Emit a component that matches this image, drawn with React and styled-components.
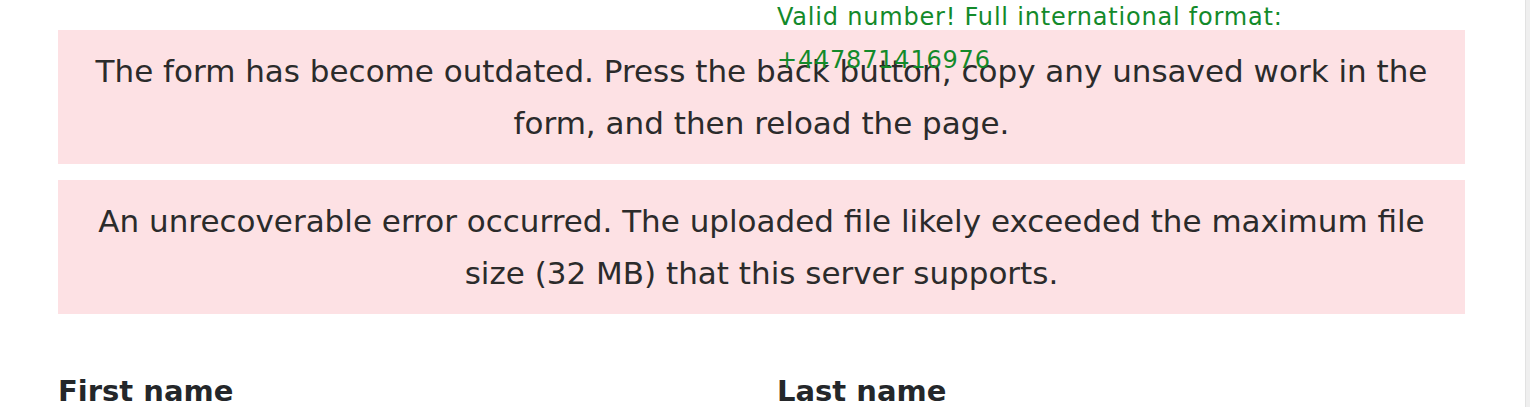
import React from "react";
import styled, { createGlobalStyle } from "styled-components";

const GlobalStyle = createGlobalStyle`
  html, body {
    margin: 0;
    padding: 0;
    background: #fff;
    overflow: hidden;
  }
  body {
    font-family: "DejaVu Sans", "Liberation Sans", sans-serif;
    color: #2b2b2b;
  }
`;

function App() {
  return (
    <Frame>
      <GlobalStyle />
      <Page>
        <PhoneHint>
          Valid number! Full international format:
          <br />
          +447871416976
        </PhoneHint>

        <Alert>
          The form has become outdated. Press the back button, copy any unsaved
          work in the form, and then reload the page.
        </Alert>
        <Alert>
          An unrecoverable error occurred. The uploaded file likely exceeded the
          maximum file size (32 MB) that this server supports.
        </Alert>

        <FieldRow>
          <Field>
            <Label>First name</Label>
          </Field>
          <Field>
            <Label>Last name</Label>
          </Field>
        </FieldRow>
      </Page>
      <ScrollTrack />
    </Frame>
  );
}

export default App;

// ------------------------------ styles ------------------------------

const Frame = styled.div`
  display: flex;
  width: 100%;
  height: 100vh;
`;

const Page = styled.div`
  position: relative;
  flex: 1;
  padding: 30px 60px 0 58px;
  display: flex;
  flex-direction: column;
  gap: 16px;
`;

const ScrollTrack = styled.div`
  width: 4px;
  background: #efefef;
  border-left: 1px solid #e2e2e2;
`;

const PhoneHint = styled.div`
  position: absolute;
  top: -4px;
  left: 777px;
  font-size: 24px;
  letter-spacing: 0.8px;
  line-height: 43px;
  color: #138a2a;
  z-index: 2;
`;

const Alert = styled.div`
  background: #fde1e4;
  color: #2b2b2b;
  text-align: center;
  font-size: 31px;
  line-height: 52px;
  padding: 15px 14px 15px;
`;

const FieldRow = styled.div`
  display: grid;
  grid-template-columns: 689px 1fr;
  column-gap: 30px;
  margin-top: 41px;
`;

const Field = styled.div`
  display: flex;
  flex-direction: column;
`;

const Label = styled.label`
  font-size: 29px;
  font-weight: 700;
  color: #24272a;
  line-height: 40px;
`;
